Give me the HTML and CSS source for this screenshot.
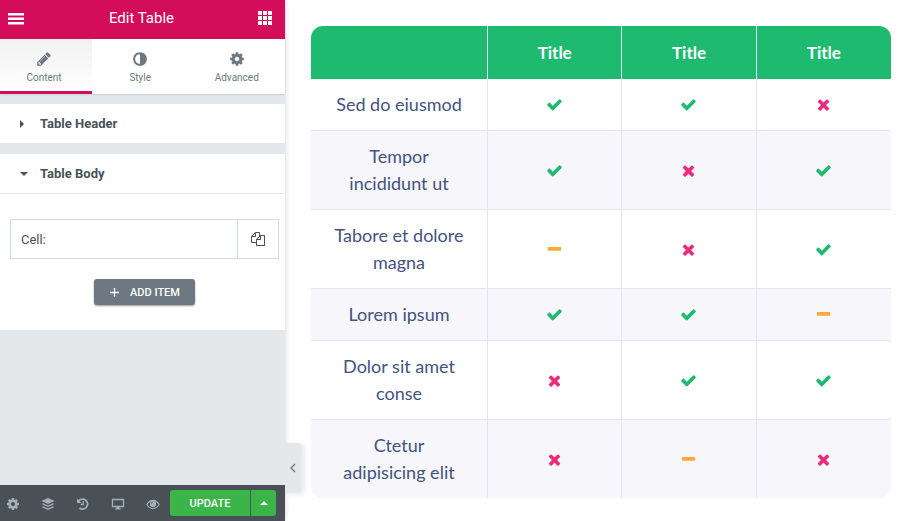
FILE: index.html
```
<!DOCTYPE html>
<html lang="en">
<head>
  <meta charset="UTF-8">
  <title>Edit Table</title>
  <link rel="stylesheet" href="styles.css">
</head>
<body>

  <!-- Icon set -->
  <svg class="sprite" aria-hidden="true">
    <symbol id="check" viewBox="0 0 1792 1792"><path d="M1671 566q0 40-28 68l-724 724-136 136q-28 28-68 28t-68-28l-136-136-362-362q-28-28-28-68t28-68l136-136q28-28 68-28t68 28l294 295 656-657q28-28 68-28t68 28l136 136q28 28 28 68z"/></symbol>
    <symbol id="times" viewBox="0 0 1792 1792"><path d="M1490 1322q0 40-28 68l-136 136q-28 28-68 28t-68-28l-294-294-294 294q-28 28-68 28t-68-28l-136-136q-28-28-28-68t28-68l294-294-294-294q-28-28-28-68t28-68l136-136q28-28 68-28t68 28l294 294 294-294q28-28 68-28t68 28l136 136q28 28 28 68t-28 68l-294 294 294 294q28 28 28 68z"/></symbol>
    <symbol id="minus" viewBox="0 0 1792 1792"><path d="M1600 736v192q0 40-28 68t-68 28h-1216q-40 0-68-28t-28-68v-192q0-40 28-68t68-28h1216q40 0 68 28t28 68z"/></symbol>
    <symbol id="pencil" viewBox="0 0 1792 1792"><path d="M491 1536l91-91-235-235-91 91v107h128v128h107zm523-928q0-22-22-22-10 0-17 7l-542 542q-7 7-7 17 0 22 22 22 10 0 17-7l542-542q7-7 7-17zm-54-192l416 416-832 832h-416v-416zm683 96q0 53-37 90l-166 166-416-416 166-165q36-38 90-38 53 0 91 38l235 234q37 39 37 91z"/></symbol>
    <symbol id="adjust" viewBox="0 0 1792 1792"><path d="M896 1440v-1088q-148 0-273 73t-198 198-73 273 73 273 198 198 273 73zm768-544q0 209-103 385.5t-279.5 279.5-385.5 103-385.5-103-279.5-279.5-103-385.5 103-385.5 279.5-279.5 385.5-103 385.5 103 279.5 279.5 103 385.5z"/></symbol>
    <symbol id="cog" viewBox="0 0 1792 1792"><path d="M1152 896q0-106-75-181t-181-75-181 75-75 181 75 181 181 75 181-75 75-181zm512-109v222q0 12-8 23t-20 13l-185 28q-19 54-39 91 35 50 107 138 10 12 10 25t-9 23q-27 37-99 108t-94 71q-12 0-26-9l-138-108q-44 23-91 38-16 136-29 186-7 28-36 28h-222q-14 0-24.5-8.5t-11.5-21.5l-28-184q-49-16-90-37l-141 107q-10 9-25 9-14 0-25-11-126-114-165-168-7-10-7-23 0-12 8-23 15-21 51-66.5t54-70.5q-27-50-41-99l-183-27q-13-2-21-12.5t-8-23.5v-222q0-12 8-23t19-13l186-28q14-46 39-92-40-57-107-138-10-12-10-24 0-10 9-23 26-36 98.5-107.5t94.5-71.5q13 0 26 10l138 107q44-23 91-38 16-136 29-186 7-28 36-28h222q14 0 24.5 8.5t11.5 21.5l28 184q49 16 90 37l142-107q9-9 24-9 13 0 25 10 129 119 165 170 7 8 7 22 0 12-8 23-15 21-51 66.5t-54 70.5q26 50 41 98l183 28q13 2 21 12.5t8 23.5z"/></symbol>
    <symbol id="copy" viewBox="0 0 1792 1792"><path d="M1696 384q40 0 68 28t28 68v1216q0 40-28 68t-68 28h-960q-40 0-68-28t-28-68v-288h-544q-40 0-68-28t-28-68v-672q0-40 20-88t48-76l408-408q28-28 76-48t88-20h416q40 0 68 28t28 68v328q68-40 128-40h416zm-544 213l-299 299h299v-299zm-640-384l-299 299h299v-299zm196 647l316-316v-416h-384v416q0 40-28 68t-68 28h-416v640h512v-256q0-40 20-88t48-76zm956 804v-1152h-384v416q0 40-28 68t-68 28h-416v640h896z"/></symbol>
    <symbol id="menu" viewBox="0 0 18 12"><path d="M1 0h16v2.500H1zM1 4.500h16V7H1zM1 9h16v2.500H1z"/></symbol>
    <symbol id="grid" viewBox="0 0 14 14"><path d="M0 0h4v4H0zM5 0h4v4H5zM10 0h4v4h-4zM0 5h4v4H0zM5 5h4v4H5zM10 5h4v4h-4zM0 10h4v4H0zM5 10h4v4H5zM10 10h4v4h-4z"/></symbol>
    <symbol id="layers" viewBox="0 0 14 14"><path d="M7 1l6.500 3L7 7 .5 4zM2 6.200l5 2.300 5-2.300 1.500.8L7 10 .5 7zM2 9.200l5 2.300 5-2.300 1.500.8L7 13 .5 10z"/></symbol>
    <symbol id="history" viewBox="0 0 14 14"><path d="M2.500 4.200A5 5 0 1 1 3.500 11" fill="none" stroke="currentColor" stroke-width="1.700"/><path d="M1 1.500v4.500h4.500z"/><path d="M7.200 4.200v3.300H4.800" fill="none" stroke="currentColor" stroke-width="1.300"/></symbol>
    <symbol id="desktop" viewBox="0 0 14 14"><path d="M1.500 2.500h11v7h-11z" fill="none" stroke="currentColor" stroke-width="1.300"/><path d="M5.500 10h3v1.500H10v1H4v-1h1.500z"/></symbol>
    <symbol id="eye" viewBox="0 0 14 14"><path d="M.8 7.500Q3.500 3.400 7 3.400t6.200 4.100Q10.500 11.600 7 11.600T.8 7.500z" fill="none" stroke="currentColor" stroke-width="1.100"/><circle cx="7" cy="6.900" r="3.100"/><path d="M5.300 6.800Q5.400 5.200 7 5.100" fill="none" stroke="#495157" stroke-width=".8"/></symbol>
    <symbol id="plus" viewBox="0 0 10 10"><path d="M4.400 1h1.200v3.400H9v1.200H5.600V9H4.400V5.600H1V4.400h3.400z"/></symbol>
    <symbol id="chevron" viewBox="0 0 8 10"><path d="M6 1L2 5l4 4" fill="none" stroke="currentColor" stroke-width="1.300"/></symbol>
    <symbol id="caret-right" viewBox="0 0 8 8"><path d="M2 0l4 4-4 4z"/></symbol>
    <symbol id="caret-down" viewBox="0 0 8 8"><path d="M0 2h8L4 6z"/></symbol>
    <symbol id="caret-up" viewBox="0 0 8 8"><path d="M0 6h8L4 2z"/></symbol>
  </svg>

  <div class="editor">

    <!-- Panel -->
    <aside class="panel">
      <header class="panel-header">
        <button class="icon-btn" aria-label="Menu"><svg class="icon-menu"><use href="#menu"/></svg></button>
        <h1>Edit Table</h1>
        <button class="icon-btn" aria-label="Widgets"><svg class="icon-grid"><use href="#grid"/></svg></button>
      </header>

      <nav class="tabs">
        <button class="tab active"><svg><use href="#pencil"/></svg>Content</button>
        <button class="tab"><svg><use href="#adjust"/></svg>Style</button>
        <button class="tab"><svg><use href="#cog"/></svg>Advanced</button>
      </nav>

      <div class="sections">
        <button class="section-title"><svg><use href="#caret-right"/></svg>Table Header</button>
        <section class="section">
          <button class="section-title open"><svg><use href="#caret-down"/></svg>Table Body</button>
          <div class="section-body">
            <div class="repeater-row">
              <button class="item-title">Cell:</button>
              <button class="item-copy" aria-label="Duplicate"><svg><use href="#copy"/></svg></button>
            </div>
            <button class="add-item"><svg><use href="#plus"/></svg>ADD ITEM</button>
          </div>
        </section>
      </div>

      <footer class="panel-footer">
        <div class="tools">
          <button aria-label="Settings"><svg><use href="#cog"/></svg></button>
          <button aria-label="Navigator"><svg><use href="#layers"/></svg></button>
          <button aria-label="History"><svg><use href="#history"/></svg></button>
          <button aria-label="Responsive"><svg><use href="#desktop"/></svg></button>
          <button aria-label="Preview"><svg><use href="#eye"/></svg></button>
        </div>
        <button class="update">UPDATE</button>
        <button class="update-more" aria-label="Save options"><svg><use href="#caret-up"/></svg></button>
      </footer>

      <button class="collapse" aria-label="Hide panel"><svg><use href="#chevron"/></svg></button>
    </aside>

    <!-- Preview -->
    <main class="preview">
      <table class="compare">
        <thead>
          <tr>
            <th class="first"></th>
            <th>Title</th>
            <th>Title</th>
            <th>Title</th>
          </tr>
        </thead>
        <tbody>
          <tr>
            <td>Sed do eiusmod</td>
            <td><svg class="yes"><use href="#check"/></svg></td>
            <td><svg class="yes"><use href="#check"/></svg></td>
            <td><svg class="no"><use href="#times"/></svg></td>
          </tr>
          <tr>
            <td>Tempor incididunt ut</td>
            <td><svg class="yes"><use href="#check"/></svg></td>
            <td><svg class="no"><use href="#times"/></svg></td>
            <td><svg class="yes"><use href="#check"/></svg></td>
          </tr>
          <tr>
            <td>Tabore et dolore magna</td>
            <td><svg class="partial"><use href="#minus"/></svg></td>
            <td><svg class="no"><use href="#times"/></svg></td>
            <td><svg class="yes"><use href="#check"/></svg></td>
          </tr>
          <tr>
            <td>Lorem ipsum</td>
            <td><svg class="yes"><use href="#check"/></svg></td>
            <td><svg class="yes"><use href="#check"/></svg></td>
            <td><svg class="partial"><use href="#minus"/></svg></td>
          </tr>
          <tr>
            <td>Dolor sit amet conse</td>
            <td><svg class="no"><use href="#times"/></svg></td>
            <td><svg class="yes"><use href="#check"/></svg></td>
            <td><svg class="yes"><use href="#check"/></svg></td>
          </tr>
          <tr>
            <td>Ctetur adipisicing elit</td>
            <td><svg class="no"><use href="#times"/></svg></td>
            <td><svg class="partial"><use href="#minus"/></svg></td>
            <td><svg class="no"><use href="#times"/></svg></td>
          </tr>
        </tbody>
      </table>
    </main>

  </div>

</body>
</html>
```
FILE: styles.css
```
* {
  box-sizing: border-box;
}
body {
  margin: 0;
  font-family: Roboto, Arial, sans-serif;
  background-color: #fff;
}
button {
  font-family: inherit;
  border: none;
  padding: 0;
  margin: 0;
  background: none;
  cursor: pointer;
}
svg {
  fill: currentColor;
  display: block;
}
.sprite {
  display: none;
}
.editor {
  display: flex;
  min-height: 100vh;
}

/* Panel */
.panel {
  position: relative;
  flex: 0 0 285px;
  display: flex;
  flex-direction: column;
  background-color: #e4e8eb;
  box-shadow: 0 0 5px rgba(0,0,0,0.2);
}
.panel-header {
  display: flex;
  align-items: center;
  justify-content: space-between;
  height: 39px;
  padding: 0 13px 3px 7px;
  background-color: #d30c5c;
  color: white;
}
.panel-header h1 {
  margin: 0;
  font-size: 15px;
  font-weight: 400;
}
.icon-btn {
  color: white;
}
.icon-menu {
  width: 18px;
  height: 12px;
  margin-top: 2px;
}
.icon-grid {
  width: 14px;
  height: 14px;
}
.tabs {
  display: grid;
  grid-template-columns: 92px 1fr 1fr;
  height: 55px;
  background-color: white;
  box-shadow: 0 1px 2px rgba(0,0,0,0.1);
}
.tab {
  display: flex;
  flex-direction: column;
  align-items: center;
  gap: 4px;
  padding-top: 12px;
  font-size: 10px;
  line-height: 14px;
  color: #6d7882;
}
.tab svg {
  width: 16px;
  height: 16px;
}
.tab.active {
  padding-right: 4px;
  background: linear-gradient(#f1f1f1, #fff);
  border-bottom: 3px solid #d30c5c;
}
.sections {
  flex: 1;
  display: flex;
  flex-direction: column;
  gap: 10px;
  padding-top: 10px;
}
.section-title {
  display: flex;
  align-items: center;
  gap: 12px;
  width: 100%;
  height: 40px;
  padding-left: 20px;
  background-color: white;
  border-bottom: 1px solid #e4e8eb;
  font-size: 13px;
  font-weight: 700;
  color: #495157;
}
.section-title svg {
  width: 8px;
  height: 8px;
}
.section-title:not(.open) svg {
  margin-left: -2px;
  margin-right: 2px;
}
.section {
  background-color: white;
}
.section-body {
  padding: 25px 6px 25px 10px;
}
.repeater-row {
  display: flex;
  height: 40px;
  border: 1px solid #d5dadf;
}
.item-title {
  flex: 1;
  padding-left: 10px;
  text-align: left;
  font-size: 13px;
  color: #495157;
}
.item-copy {
  width: 41px;
  border-left: 1px solid #d5dadf;
  color: #495157;
}
.item-copy svg {
  width: 14px;
  height: 14px;
  margin: 0 auto;
}
.add-item {
  display: flex;
  align-items: center;
  gap: 10px;
  height: 26px;
  margin: 20px auto 0;
  padding: 0 15px;
  border-radius: 3px;
  background-color: #6d7882;
  box-shadow: 0 1px 2px rgba(0,0,0,0.4);
  font-size: 11px;
  font-weight: 500;
  color: white;
}
.add-item svg {
  width: 11px;
  height: 11px;
}
.panel-footer {
  display: flex;
  align-items: center;
  height: 36px;
  padding-right: 9px;
  background-color: #495157;
}
.tools {
  flex: 1;
  display: flex;
  gap: 21px;
  padding: 2px 0 0 6px;
  color: #a4afb7;
}
.tools button {
  color: inherit;
}
.tools svg {
  width: 14px;
  height: 14px;
}
.update, .update-more {
  height: 26px;
  background-color: #39b54a;
  color: white;
  font-size: 11px;
  font-weight: 500;
}
.update {
  width: 80px;
  border-radius: 3px 0 0 3px;
}
.update-more {
  width: 25px;
  margin-left: 1px;
  border-radius: 0 3px 3px 0;
}
.update-more svg {
  width: 8px;
  height: 8px;
  margin: 0 auto;
}
.collapse {
  position: absolute;
  left: 100%;
  bottom: 28px;
  width: 16px;
  height: 50px;
  background-color: #e4e8eb;
  border-radius: 0 3px 3px 0;
  box-shadow: 3px 1px 5px rgba(0,0,0,0.1);
  color: #6d7882;
}
.collapse svg {
  width: 8px;
  height: 10px;
  margin: 0 auto;
}

/* Preview */
.preview {
  flex: 1;
  padding: 26px 15px 23px 26px;
}
.compare {
  width: 100%;
  table-layout: fixed;
  border-collapse: separate;
  border-spacing: 0;
  border-radius: 12px;
  overflow: hidden;
  font-family: Lato, sans-serif;
  font-size: 18px;
  line-height: 27px;
  text-align: center;
  color: #435381;
}
.compare .first {
  width: 177px;
}
.compare th {
  height: 53px;
  padding: 13px 22px;
  background-color: #1eba70;
  color: white;
  font-size: 17px;
  font-weight: 700;
}
.compare td {
  padding: 12px 22px;
  border-bottom: 1px solid #e6e5f4;
}
.compare th:not(:last-child),
.compare td:not(:last-child) {
  border-right: 1px solid #e6e5f4;
}
.compare tr:last-child td {
  border-bottom: none;
}
.compare tbody tr:nth-child(even) {
  background-color: #f6f6fb;
}
.compare svg {
  width: 17px;
  height: 17px;
  margin: 0 auto;
}
.yes {
  color: #1eba70;
}
.no {
  color: #ec2a7b;
}
.partial {
  color: #ffa834;
}
```
